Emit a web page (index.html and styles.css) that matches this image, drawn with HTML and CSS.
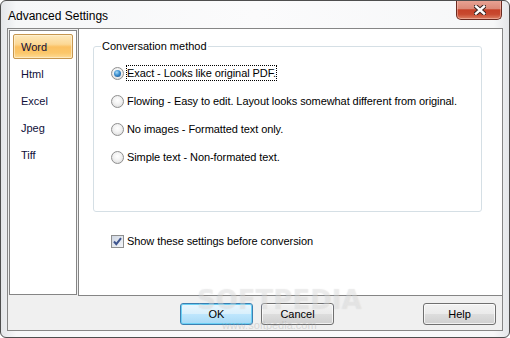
FILE: index.html
```html
<!DOCTYPE html>
<html lang="en">
<head>
    <meta charset="UTF-8">
    <title>Advanced Settings</title>
    <link rel="stylesheet" href="styles.css">
</head>
<body>

    <div class="window">
        <div class="titlebar">
            <span class="title">Advanced Settings</span>
            <div class="close-btn">
                <svg width="12" height="10" viewBox="0 0 12 10">
                    <path d="M2 1.5 L10 8.5 M10 1.5 L2 8.5" stroke="#3b2622" stroke-width="4.4" stroke-linecap="square" fill="none"/>
                    <path d="M2 1.5 L10 8.5 M10 1.5 L2 8.5" stroke="#ffffff" stroke-width="2.4" stroke-linecap="square" fill="none"/>
                </svg>
            </div>
        </div>

        <div class="client">
            <div class="panels">
                <ul class="format-list">
                    <li class="format selected">Word</li>
                    <li class="format">Html</li>
                    <li class="format">Excel</li>
                    <li class="format">Jpeg</li>
                    <li class="format">Tiff</li>
                </ul>

                <div class="options">
                    <fieldset class="method">
                        <legend>Conversation method</legend>
                        <div class="radio-row">
                            <span class="radio checked"></span>
                            <span class="radio-text focused">Exact - Looks like original PDF.</span>
                        </div>
                        <div class="radio-row">
                            <span class="radio"></span>
                            <span class="radio-text">Flowing - Easy to edit. Layout looks somewhat different from original.</span>
                        </div>
                        <div class="radio-row">
                            <span class="radio"></span>
                            <span class="radio-text">No images - Formatted text only.</span>
                        </div>
                        <div class="radio-row">
                            <span class="radio"></span>
                            <span class="radio-text">Simple text - Non-formated text.</span>
                        </div>
                    </fieldset>

                    <div class="check-row">
                        <span class="checkbox">
                            <svg width="11" height="11" viewBox="0 0 11 11">
                                <path d="M2 5.5 L4.3 8.2 L9 2.2" stroke="#3e558f" stroke-width="2" fill="none"/>
                            </svg>
                        </span>
                        <span class="check-text">Show these settings before conversion</span>
                    </div>
                </div>
            </div>

            <div class="buttons">
                <button class="btn default">OK</button>
                <button class="btn">Cancel</button>
                <span class="spacer"></span>
                <button class="btn">Help</button>
            </div>
        </div>

        <div class="watermark">
            <span class="wm-big">SOFTPEDIA</span>
            <span class="wm-small">www.softpedia.com</span>
        </div>
    </div>

</body>
</html>
```

FILE: styles.css
```css
body {
    margin: 0;
    padding: 0;
    background-color: #ffffff;
    font-family: 'Liberation Sans', Arial, sans-serif;
    font-size: 11px;
    color: #000;
}

.window {
    position: relative;
    width: 510px;
    height: 338px;
    box-sizing: border-box;
    border: 1px solid #4e4e4e;
    border-radius: 6px;
    padding: 0 6px 6px 6px;
    background: linear-gradient(to right, #e4e6e9 0%, #f6f7f8 3%, #fbfbfc 50%, #f6f7f8 97%, #e4e6e9 100%);
    overflow: hidden;
}

.titlebar {
    height: 27px;
    display: flex;
    align-items: center;
}

.title {
    font-size: 12px;
    padding-left: 1px;
    margin-top: 2px;
    color: #000;
}

.close-btn {
    position: absolute;
    top: -1px;
    right: 7px;
    width: 46px;
    height: 20px;
    box-sizing: border-box;
    border: 1px solid #6b2a20;
    border-top: none;
    border-radius: 0 0 5px 5px;
    background: linear-gradient(to bottom, #e9a596 0%, #dc8a78 45%, #c64128 52%, #c8492f 75%, #dd8064 100%);
    box-shadow: inset 0 0 0 1px rgba(255, 210, 200, 0.45);
    display: flex;
    align-items: center;
    justify-content: center;
}

.close-btn svg {
    margin-left: 2px;
}

.client {
    height: 303px;
    box-sizing: border-box;
    border: 1px solid #868686;
    background-color: #f0f0f0;
    display: flex;
    flex-direction: column;
}

.panels {
    height: 267px;
    display: flex;
}

.format-list {
    list-style: none;
    margin: 1px 1px 0 1px;
    padding: 3px 0 0 0;
    width: 68px;
    height: 265px;
    box-sizing: border-box;
    border: 1px solid #858585;
    background-color: #fff;
}

.format {
    height: 25px;
    margin: 0 3px 2px 3px;
    box-sizing: border-box;
    padding-left: 7px;
    display: flex;
    align-items: center;
    color: #10103a;
    border: 1px solid transparent;
}

.format.selected {
    border-color: #c6964e;
    border-radius: 2px;
    background: linear-gradient(to bottom, #fde9bd 0%, #fcd895 40%, #fbc061 52%, #fbc76a 78%, #fddb97 100%);
    box-shadow: inset 0 0 0 1px rgba(255, 245, 220, 0.6);
}

.options {
    flex: 1;
    background-color: #fff;
    border-left: 1px solid #858585;
    border-bottom: 1px solid #858585;
}

.method {
    margin: 11px 20px 0 14px;
    padding: 6px 0 40px 7px;
    border: 1px solid #d5dfe5;
    border-radius: 3px;
}

.method legend {
    padding: 0 1px;
    line-height: 13px;
    color: #000;
}

.radio-row {
    height: 28px;
    display: flex;
    align-items: center;
    padding-left: 10px;
}

.radio {
    width: 13px;
    height: 13px;
    box-sizing: border-box;
    border-radius: 50%;
    border: 1px solid #8f8f8f;
    background: radial-gradient(circle at 50% 40%, #ffffff 0%, #f2f2f2 45%, #d4d4d4 100%);
    margin-right: 2px;
    display: flex;
    align-items: center;
    justify-content: center;
}

.radio.checked::after {
    content: "";
    width: 7px;
    height: 7px;
    border-radius: 50%;
    background: radial-gradient(circle at 40% 35%, #a9dcf8 0%, #3c8fd0 45%, #12457e 100%);
}

.radio-text {
    border: 1px dotted transparent;
    letter-spacing: -0.08px;
    line-height: 14px;
}

.radio-text.focused {
    border-color: #000;
}

.check-row {
    display: flex;
    align-items: center;
    height: 14px;
    margin-top: 22px;
    padding-left: 32px;
}

.checkbox {
    width: 13px;
    height: 13px;
    box-sizing: border-box;
    border: 1px solid #8e8f8f;
    background: linear-gradient(to bottom right, #cfd6e2, #f4f6f9);
    display: flex;
    align-items: center;
    justify-content: center;
    margin-right: 3px;
}

.check-text {
    letter-spacing: -0.08px;
}

.buttons {
    flex: 1;
    display: flex;
    align-items: flex-start;
    padding: 7px 6px 0 172px;
    gap: 8px;
}

.spacer {
    flex: 1;
}

.btn {
    width: 73px;
    height: 22px;
    font-family: 'Liberation Sans', Arial, sans-serif;
    font-size: 11px;
    color: #000;
    border: 1px solid #707070;
    border-radius: 3px;
    background: linear-gradient(to bottom, #f2f2f2 0%, #ebebeb 48%, #dddddd 52%, #cfcfcf 100%);
    box-shadow: inset 0 0 0 1px rgba(255, 255, 255, 0.7);
    padding: 0;
}

.btn.default {
    border-color: #3c7fb1;
    background: linear-gradient(to bottom, #eaf6fd 0%, #d9f0fc 48%, #bee6fd 52%, #a7d9f5 100%);
    box-shadow: inset 0 0 0 1px #6ad0f5;
}

.watermark {
    position: absolute;
    left: 196px;
    top: 284px;
    display: flex;
    flex-direction: column;
    align-items: center;
    pointer-events: none;
}

.wm-big {
    font-family: 'DejaVu Sans', sans-serif;
    font-size: 26px;
    font-weight: bold;
    letter-spacing: 0;
    line-height: 30px;
    color: rgba(255, 255, 255, 0.25);
    text-shadow: 0 0 1px rgba(150, 150, 150, 0.25);
}

.wm-small {
    font-size: 11px;
    line-height: 12px;
    color: rgba(160, 160, 160, 0.35);
    margin-top: 4px;
    margin-right: 20px;
}
```
